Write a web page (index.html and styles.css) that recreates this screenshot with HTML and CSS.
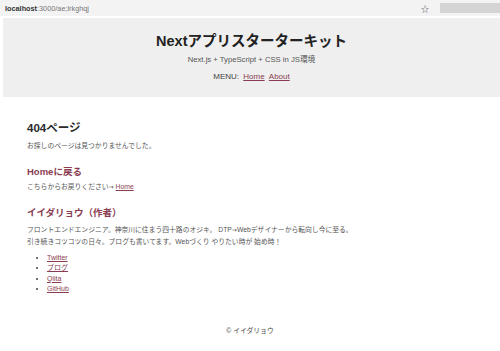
FILE: index.html
```html
<!DOCTYPE html>
<html lang="ja">
<head>
    <meta charset="UTF-8">
    <meta name="viewport" content="width=device-width, initial-scale=1.0">
    <title>404ページ</title>
    <link rel="stylesheet" href="styles.css">
</head>
<body>
    <div class="browserbar">
        <div class="url"><b>localhost</b>:3000/ae;lrkghqj</div>
        <span class="star">☆</span>
        <div class="profile"></div>
    </div>

    <header class="site-header">
        <h1>Nextアプリスターターキット</h1>
        <p class="sub">Next.js + TypeScript + CSS in JS環境</p>
        <nav class="menu">MENU: <a href="#">Home</a> <a href="#">About</a></nav>
    </header>

    <main class="content">
        <h2 class="page-title">404ページ</h2>
        <p>お探しのページは見つかりませんでした。</p>

        <h3>Homeに戻る</h3>
        <p class="tight">こちらからお戻りください<span class="arrow">→</span> <a href="#">Home</a></p>

        <h3>イイダリョウ（作者）</h3>
        <p>フロントエンドエンジニア。神奈川に住まう四十路のオジキ。 DTP<span class="arrow">→</span>Webデザイナーから転向し今に至る。<br>引き続きコツコツの日々。ブログも書いてます。Webづくり やりたい時が 始め時！</p>
        <ul class="links">
            <li><a href="#">Twitter</a></li>
            <li><a href="#">ブログ</a></li>
            <li><a href="#">Qiita</a></li>
            <li><a href="#">GitHub</a></li>
        </ul>
    </main>

    <footer class="site-footer">© イイダリョウ</footer>
</body>
</html>
```

FILE: styles.css
```css
body {
    margin: 0;
    font-family: "Liberation Sans", "Noto Sans CJK JP", sans-serif;
    color: #444;
    background-color: #fff;
}
a {
    color: #8a3d52;
}
.arrow {
    font-family: "DejaVu Sans", sans-serif;
    font-size: 0.9em;
}
.browserbar {
    display: flex;
    align-items: center;
    height: 16px;
    background-color: #f3f3f4;
    border-bottom: 2px solid #fff;
}
.url {
    flex: 1;
    padding-left: 5px;
    font-size: 7.3px;
    color: #777;
}
.url b {
    color: #333;
}
.star {
    font-size: 8px;
    color: #555;
    margin-right: 11px;
}
.profile {
    width: 60px;
    height: 10px;
    background-color: #d4d4d4;
}
.site-header {
    margin-left: 3px;
    padding: 13px 0 14px;
    background-color: #efefef;
    text-align: center;
}
.site-header h1 {
    margin: 0;
    font-size: 14.5px;
    line-height: 20px;
    color: #222;
}
.sub {
    margin: 3px 0 0;
    font-size: 7.7px;
    line-height: 12px;
    color: #555;
}
.menu {
    margin-top: 5px;
    font-size: 8px;
    line-height: 12px;
    color: #444;
}
.menu a {
    margin-left: 2px;
}
.content {
    padding: 0 27px;
    margin-top: 23px;
}
.page-title {
    margin: 0;
    font-size: 11.5px;
    line-height: 16px;
    color: #2a2a2a;
}
.content p {
    margin: 4px 0 0;
    font-size: 6.8px;
    line-height: 12px;
    color: #555;
}
.content p.tight {
    margin-top: 2px;
}
.content h3 {
    margin: 13px 0 0;
    font-size: 9.5px;
    line-height: 14px;
    color: #8a3d52;
}
.links {
    margin: 5px 0 0;
    padding-left: 20px;
    font-size: 7px;
    line-height: 10.4px;
}
.site-footer {
    margin-top: 30px;
    text-align: center;
    font-size: 6.8px;
    line-height: 12px;
    color: #444;
}
```
